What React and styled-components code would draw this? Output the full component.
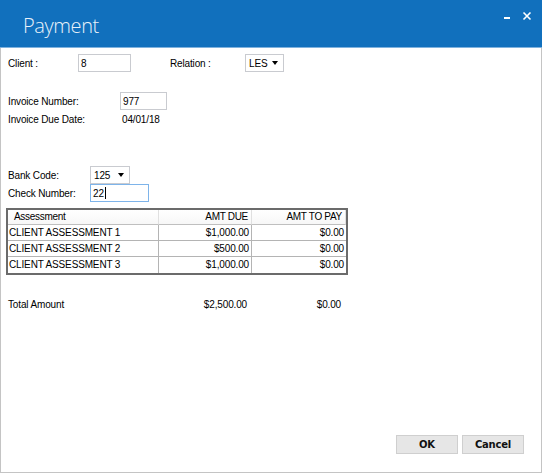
import styled, { createGlobalStyle } from 'styled-components'

const GlobalStyle = createGlobalStyle`
	* { box-sizing: border-box; }
	html, body { margin: 0; padding: 0; background: #fff; }
	body {
		font-family: 'Liberation Sans', Arial, sans-serif;
		font-size: 10px;
		letter-spacing: -0.15px;
		color: #000;
	}
`

const Window = styled.div`
	width: 542px;
	height: 473px;
	display: flex;
	flex-direction: column;
	border: 1px solid #c4c4c4;
	border-top: none;
	background: #fff;
`

const TitleBar = styled.div`
	height: 48px;
	margin: 0 -1px;
	background: #1170bd;
	border-bottom: 1px solid #7fb2de;
	display: flex;
	align-items: flex-start;
	justify-content: space-between;
	padding: 10px 10px 0 23px;
`

const Title = styled.h1`
	margin: 0;
	font-family: 'Open Sans', 'Noto Sans', sans-serif;
	font-weight: 300;
	font-size: 20px;
	letter-spacing: -0.4px;
	line-height: 31px;
	color: #e9f2fa;
`

const Controls = styled.div`
	display: flex;
	gap: 10px;
	align-items: center;
	padding-top: 1px;
`

const Body = styled.div`
	flex: 1;
	display: flex;
	flex-direction: column;
	padding: 6px 17px 18px 7px;
`

const Row = styled.div`
	display: flex;
	align-items: center;
	height: ${(p) => p.h || 18}px;
	margin-top: ${(p) => p.mt || 0}px;
`

const Label = styled.span`
	width: ${(p) => p.w}px;
	flex-shrink: 0;
	white-space: nowrap;
`

const Input = styled.div`
	width: ${(p) => p.w}px;
	height: ${(p) => p.h || 18}px;
	border: 1px solid ${(p) => (p.focus ? '#7eb4ea' : '#c9cbd0')};
	padding: 2px 0 0 2px;
	line-height: 13px;
	display: flex;
	align-items: flex-start;
`

const Caret = styled.span`
	width: 1px;
	height: 12px;
	background: #000;
	margin-left: 1px;
`

const Select = styled.div`
	width: ${(p) => p.w}px;
	height: 18px;
	border: 1px solid #c9cbd0;
	display: flex;
	align-items: center;
	justify-content: space-between;
	padding: 0 5px 0 3px;

	&::after {
		content: '';
		border-left: 3.5px solid transparent;
		border-right: 3.5px solid transparent;
		border-top: 4px solid #000;
	}
`

const Value = styled.span`
	padding-left: 2px;
`

const Grid = styled.div`
	margin: 6px 0 0 -2px;
	width: 342px;
	border: 2px solid #6b6b6b;
	display: grid;
	grid-template-columns: 151px 93px 94px;
	background: #fff;
`

const Head = styled.div`
	height: 15px;
	line-height: 14px;
	font-size: 10px;
	letter-spacing: -0.3px;
	padding: 0 ${(p) => (p.right ? '3px' : '0')} 0 ${(p) => (p.right ? '0' : '6px')};
	text-align: ${(p) => (p.right ? 'right' : 'left')};
	border-right: 1px solid #e0e0e0;
	border-bottom: 1px solid #bfbfbf;
	background: linear-gradient(#fff, #f7f7f7);
`

const Cell = styled.div`
	height: 16px;
	line-height: 15px;
	padding: 0 ${(p) => (p.right ? '2px' : '0')} 0 ${(p) => (p.right ? '0' : '1px')};
	text-align: ${(p) => (p.right ? 'right' : 'left')};
	border-right: 1px solid #b4b4b4;
	border-bottom: 1px solid #b4b4b4;
	white-space: nowrap;

	&:nth-child(3n) { border-right: none; }
	&:nth-last-child(-n + 3) { border-bottom: none; }
`

const TotalRow = styled.div`
	display: grid;
	grid-template-columns: 151px 88px 94px;
	margin-top: 22px;
	height: 16px;
	line-height: 16px;
`

const Amount = styled.span`
	text-align: right;
`

const Footer = styled.div`
	margin-top: auto;
	display: flex;
	justify-content: flex-end;
	gap: 4px;
`

const Button = styled.button`
	width: 62px;
	height: 19px;
	padding: 0;
	border: 1px solid #cfcfcf;
	background: #e6e6e6;
	font-family: 'DejaVu Sans', Tahoma, sans-serif;
	font-weight: bold;
	font-size: 10px;
	letter-spacing: -0.2px;
	color: #111;
`

const rows = [
	['CLIENT ASSESSMENT 1', '$1,000.00', '$0.00'],
	['CLIENT ASSESSMENT 2', '$500.00', '$0.00'],
	['CLIENT ASSESSMENT 3', '$1,000.00', '$0.00'],
]

export default function App() {
	return (
		<>
			<GlobalStyle />
			<Window>
				<TitleBar>
					<Title>Payment</Title>
					<Controls>
						<svg width='9' height='10' viewBox='0 0 9 10'>
							<rect x='1' y='6' width='6' height='2' fill='#fff' />
						</svg>
						<svg width='10' height='10' viewBox='0 0 10 10'>
							<path d='M1.5 1.5 L8.5 8.5 M8.5 1.5 L1.5 8.5' stroke='#fff' strokeWidth='1.6' />
						</svg>
					</Controls>
				</TitleBar>
				<Body>
					<Row>
						<Label w={70}>Client :</Label>
						<Input w={53}>8</Input>
						<Label w={39} />
						<Label w={75}>Relation :</Label>
						<Select w={39}>LES</Select>
					</Row>
					<Row mt={20}>
						<Label w={112}>Invoice Number:</Label>
						<Input w={47}>977</Input>
					</Row>
					<Row>
						<Label w={112}>Invoice Due Date:</Label>
						<Value>04/01/18</Value>
					</Row>
					<Row mt={38}>
						<Label w={82}>Bank Code:</Label>
						<Select w={40}>125</Select>
					</Row>
					<Row>
						<Label w={82}>Check Number:</Label>
						<Input w={59} focus>
							22
							<Caret />
						</Input>
					</Row>
					<Grid>
						<Head>Assessment</Head>
						<Head right>AMT DUE</Head>
						<Head right>AMT TO PAY</Head>
						{rows.map((r) =>
							r.map((c, i) => (
								<Cell key={r[0] + i} right={i > 0}>
									{c}
								</Cell>
							))
						)}
					</Grid>
					<TotalRow>
						<span>Total Amount</span>
						<Amount>$2,500.00</Amount>
						<Amount>$0.00</Amount>
					</TotalRow>
					<Footer>
						<Button>OK</Button>
						<Button>Cancel</Button>
					</Footer>
				</Body>
			</Window>
		</>
	)
}
